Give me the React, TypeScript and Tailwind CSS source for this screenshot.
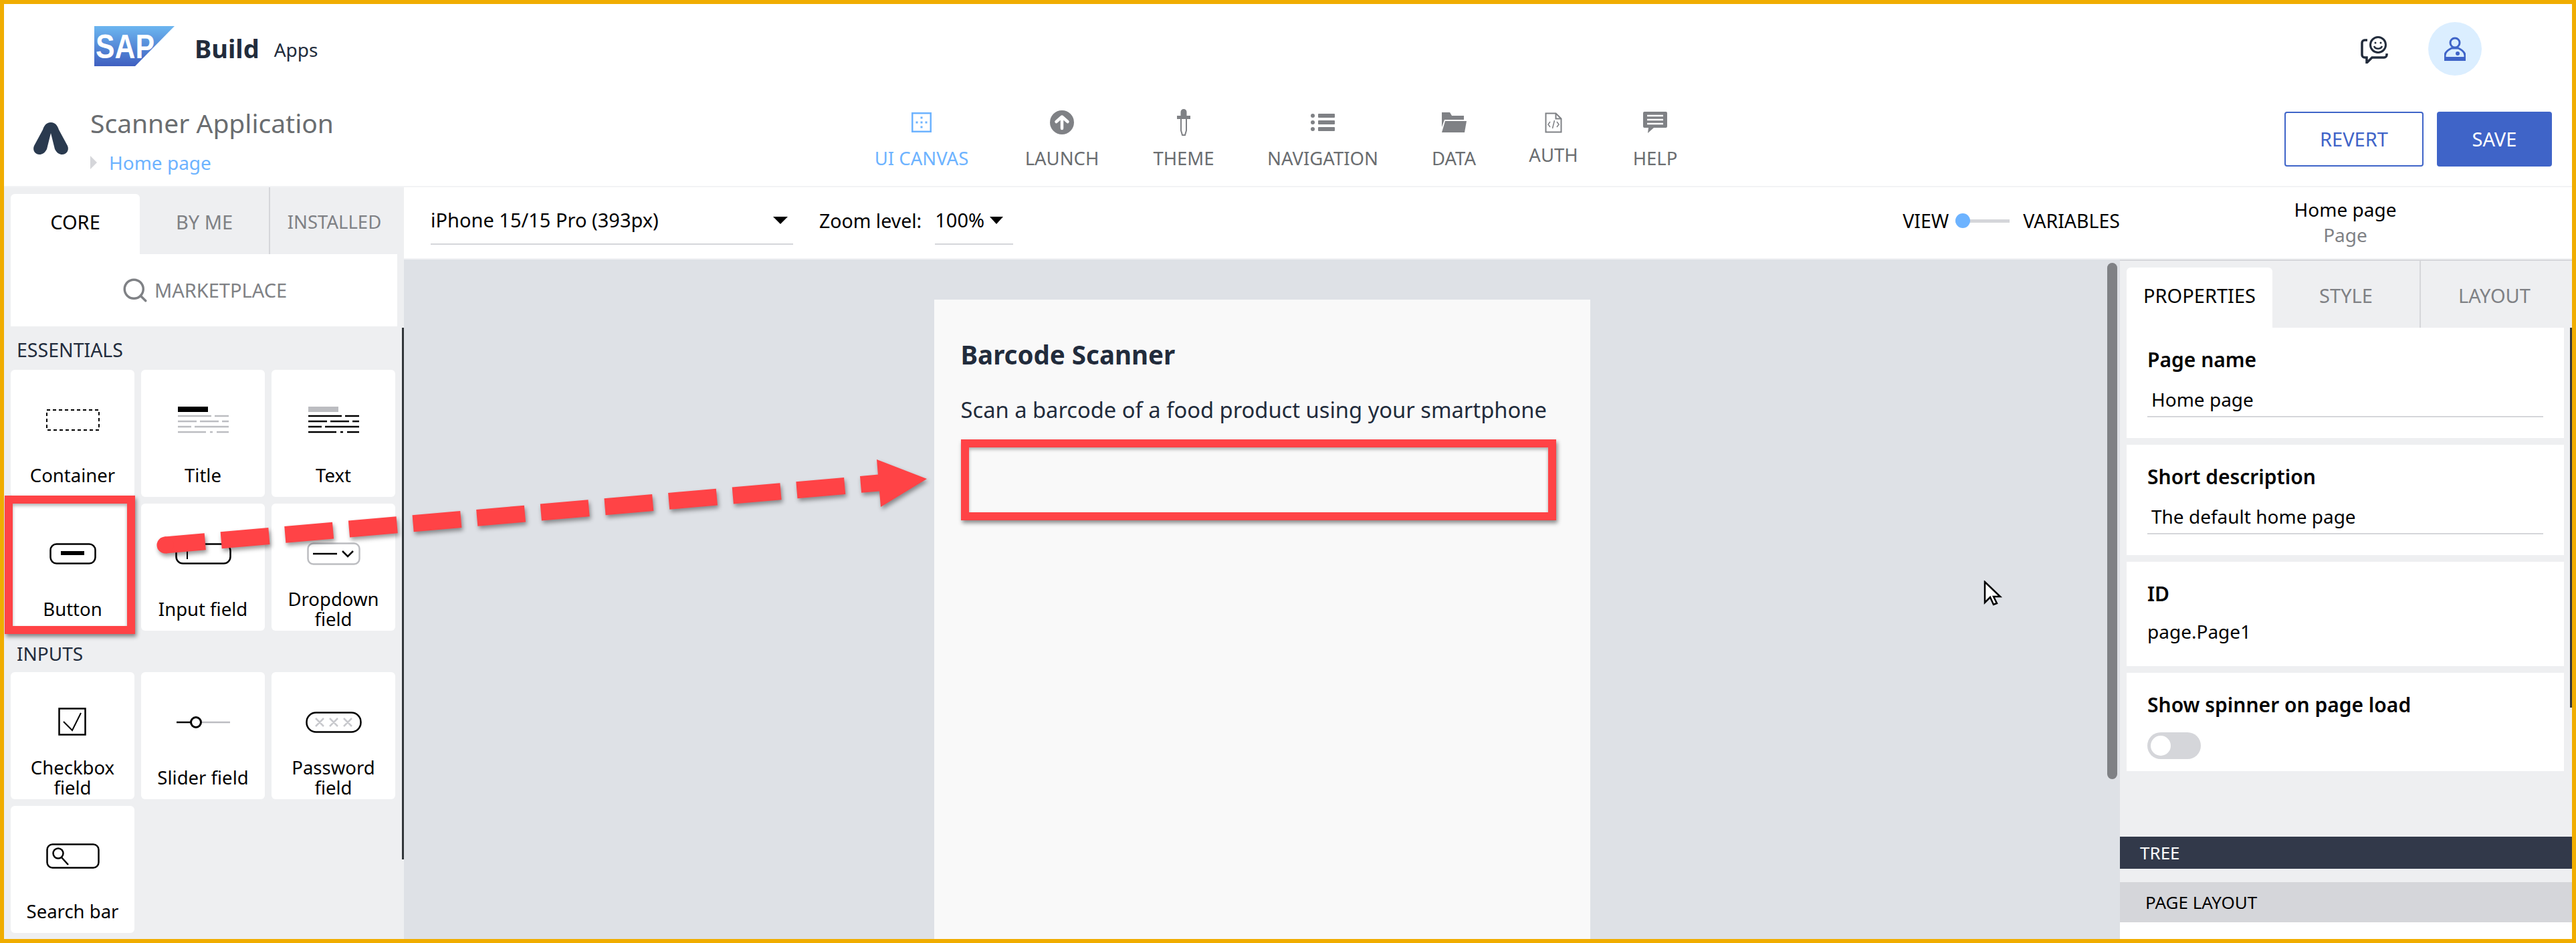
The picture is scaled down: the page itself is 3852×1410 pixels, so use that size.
import React from "react";
import { Search } from "lucide-react";

const font = "font-['Noto_Sans',sans-serif]";

function NavIcon({ name }: { name: string }) {
    if (name === "UI CANVAS") {
        return (
            <svg width="30" height="30" viewBox="0 0 30 30">
                <rect x="1.250" y="1.250" width="27.500" height="27.500" fill="none" stroke="#6db3ff" strokeWidth="2.500" />
                <rect x="13.500" y="6.500" width="3" height="3" fill="#6db3ff" />
                <rect x="13.500" y="13.500" width="3" height="3" fill="#6db3ff" />
                <rect x="13.500" y="20.500" width="3" height="3" fill="#6db3ff" />
                <rect x="6.500" y="13.500" width="3" height="3" fill="#6db3ff" />
                <rect x="20.500" y="13.500" width="3" height="3" fill="#6db3ff" />
            </svg>
        );
    }
    if (name === "LAUNCH") {
        return (
            <svg width="36" height="36" viewBox="0 0 36 36">
                <circle cx="18" cy="18" r="18" fill="#7f8185" />
                <path d="M18 27V10M9.500 17L18 9.500 26.500 17" fill="none" stroke="#fff" strokeWidth="4.500" strokeLinecap="round" strokeLinejoin="round" />
            </svg>
        );
    }
    if (name === "THEME") {
        return (
            <svg width="20" height="40" viewBox="0 0 20 40">
                <path d="M5.500 10V4.500a4.500 4.500 0 0 1 9 0V10H20v5H0v-5z" fill="#7f8185" />
                <path d="M6 15v17l2 7h4l2-7V15" fill="#fff" stroke="#7f8185" strokeWidth="2" />
            </svg>
        );
    }
    if (name === "NAVIGATION") {
        return (
            <svg width="36" height="28" viewBox="0 0 36 28">
                <circle cx="3" cy="4" r="3" fill="#7f8185" />
                <circle cx="3" cy="14" r="3" fill="#7f8185" />
                <circle cx="3" cy="24" r="3" fill="#7f8185" />
                <rect x="11" y="1" width="25" height="6" rx="1" fill="#7f8185" />
                <rect x="11" y="11" width="25" height="6" rx="1" fill="#7f8185" />
                <rect x="11" y="21" width="25" height="6" rx="1" fill="#7f8185" />
            </svg>
        );
    }
    if (name === "DATA") {
        return (
            <svg width="38" height="30" viewBox="0 0 38 30">
                <path d="M1 0h12l3 5h18v6H5L1 22z" fill="#7f8185" />
                <path d="M6 13h32l-3 17H1z" fill="#7f8185" />
            </svg>
        );
    }
    if (name === "AUTH") {
        return (
            <svg width="26" height="31" viewBox="0 0 26 31">
                <path d="M1.500 1.500h15l8 8v20h-23zM16.500 1.500v8h8" fill="none" stroke="#7f8185" strokeWidth="2" />
                <path d="M8 14l-3 4 3 4M18 14l3 4-3 4M14.500 12l-3 12" fill="none" stroke="#7f8185" strokeWidth="1.500" />
            </svg>
        );
    }
    return (
        <svg width="36" height="32" viewBox="0 0 36 32">
            <path d="M2 0h32a2 2 0 0 1 2 2v20a2 2 0 0 1-2 2H16l-9 8 1-8H2a2 2 0 0 1-2-2V2a2 2 0 0 1 2-2z" fill="#7f8185" />
            <path d="M6 6h24M6 12h24M6 18h24" stroke="#fff" strokeWidth="2.500" />
        </svg>
    );
}

function PaletteIcon({ name }: { name: string }) {
    const lines = (top: string, rest: string) => (
        <svg width="76" height="40" viewBox="0 0 76 40">
            <rect x="0" y="0" width="45" height="8" fill={top} />
            <path d="M0 14h50M55 14h21M0 22h28M33 22h28M66 22h10M0 30h20M25 30h51M0 38h42M48 38h4M58 38h18" stroke={rest} strokeWidth="2.500" />
        </svg>
    );
    switch (name) {
        case "Container":
            return (
                <svg width="80" height="32" viewBox="0 0 80 32">
                    <rect x="1" y="1" width="78" height="30" fill="none" stroke="#000" strokeWidth="2" strokeDasharray="5 4" />
                </svg>
            );
        case "Title":
            return lines("#000", "#bcbdc1");
        case "Text":
            return lines("#bcbdc1", "#000");
        case "Button":
            return (
                <svg width="70" height="32" viewBox="0 0 70 32">
                    <rect x="1.500" y="1.500" width="67" height="29" rx="9" fill="none" stroke="#000" strokeWidth="2.500" />
                    <rect x="17" y="12" width="35" height="6" fill="#000" />
                </svg>
            );
        case "Input field":
            return (
                <svg width="84" height="32" viewBox="0 0 84 32">
                    <rect x="1.500" y="1.500" width="81" height="29" rx="10" fill="none" stroke="#000" strokeWidth="2.500" />
                    <path d="M18 8v16" stroke="#000" strokeWidth="2" />
                </svg>
            );
        case "Dropdown field":
            return (
                <svg width="80" height="34" viewBox="0 0 80 34">
                    <rect x="1.500" y="1.500" width="77" height="31" rx="8" fill="#fff" stroke="#bcbdc1" strokeWidth="2.500" />
                    <path d="M9 17h36" stroke="#000" strokeWidth="2.500" />
                    <path d="M53 13l8 8 8-8" fill="none" stroke="#000" strokeWidth="2.500" />
                </svg>
            );
        case "Checkbox field":
            return (
                <svg width="44" height="44" viewBox="0 0 44 44">
                    <rect x="1.500" y="1.500" width="39" height="39" fill="none" stroke="#000" strokeWidth="2.500" />
                    <path d="M8 21l13 13L34 8" fill="none" stroke="#000" strokeWidth="2" />
                </svg>
            );
        case "Slider field":
            return (
                <svg width="80" height="20" viewBox="0 0 80 20">
                    <path d="M0 10h22" stroke="#000" strokeWidth="2.500" />
                    <path d="M38 10h42" stroke="#bcbdc1" strokeWidth="2.500" />
                    <circle cx="29" cy="10" r="7.500" fill="#fff" stroke="#000" strokeWidth="3" />
                </svg>
            );
        case "Password field":
            return (
                <svg width="84" height="32" viewBox="0 0 84 32">
                    <rect x="1.500" y="1.500" width="81" height="29" rx="14" fill="none" stroke="#000" strokeWidth="2.500" />
                    <path d="M15 10l12 12M27 10L15 22M36 10l12 12M48 10L36 22M57 10l12 12M69 10L57 22" stroke="#c8c9cd" strokeWidth="2.500" />
                </svg>
            );
        default:
            return (
                <svg width="80" height="38" viewBox="0 0 80 38">
                    <rect x="1.500" y="1.500" width="77" height="35" rx="8" fill="none" stroke="#000" strokeWidth="2.500" />
                    <circle cx="18" cy="15" r="7.500" fill="none" stroke="#000" strokeWidth="2.500" />
                    <path d="M23 21l10 11" stroke="#000" strokeWidth="2.500" />
                </svg>
            );
    }
}

const essentials = ["Container", "Title", "Text", "Button", "Input field", "Dropdown field"];
const inputs = ["Checkbox field", "Slider field", "Password field", "Search bar"];
const nav = [
    { name: "UI CANVAS", width: "w-[210px]" },
    { name: "LAUNCH", width: "w-[210px]" },
    { name: "THEME", width: "w-[154px]" },
    { name: "NAVIGATION", width: "w-[262px]" },
    { name: "DATA", width: "w-[130px]" },
    { name: "AUTH", width: "w-[168px]" },
    { name: "HELP", width: "w-[136px]" },
];

function PaletteCard({ name }: { name: string }) {
    return (
        <div className="h-[190px] rounded-md bg-white flex flex-col items-center overflow-hidden">
            <div className="h-[126px] pt-[24px] flex items-center justify-center">
                <PaletteIcon name={name} />
            </div>
            <div className="flex-1 w-full flex items-center justify-center text-center text-[27.500px] leading-[30px] text-black px-5">
                {name}
            </div>
        </div>
    );
}

function PropertyCard({ label, value, field }: { label: string; value: string; field?: boolean }) {
    return (
        <div className={`bg-white px-[31px] pt-[33px] ${field ? "h-[165px]" : "h-[156px]"}`}>
            <div className="text-[30px] leading-[30px] font-semibold text-black">{label}</div>
            {field ? (
                <div className="mt-[26px] pl-[6px] pb-[6px] border-b-2 border-[#d5d6da] text-[28px] leading-[37px] text-black">
                    {value}
                </div>
            ) : (
                <div className="mt-[23px] text-[28px] leading-[37px] text-black">{value}</div>
            )}
        </div>
    );
}

export default function App() {
    return (
        <div className={`relative w-[3852px] h-[1410px] overflow-hidden border-[6px] border-[#f0ad00] bg-white ${font}`}>
            {/* Global header */}
            <div className="h-[274px] border-b-2 border-[#f2f3f5]">
                <div className="h-[146px] flex items-start pl-[135px] pr-[135px] pt-[33px]">
                    <svg width="120" height="60" viewBox="0 0 120 60">
                        <defs>
                            <linearGradient id="sapBlue" x1="0" y1="0" x2="0" y2="1">
                                <stop offset="0" stopColor="#6cb6f0" />
                                <stop offset="1" stopColor="#3f5fc0" />
                            </linearGradient>
                        </defs>
                        <path d="M0 0h120L61 60H0z" fill="url(#sapBlue)" />
                        <text x="2" y="48" fontFamily="Liberation Sans" fontWeight="700" fontSize="50" fill="#fff" textLength="88" lengthAdjust="spacingAndGlyphs">
                            SAP
                        </text>
                    </svg>
                    <div className="ml-[30px] mt-[13px] text-[38px] leading-[40px] font-bold text-[#222c3c]">Build</div>
                    <div className="ml-[22px] mt-[17px] text-[28px] leading-[36px] text-[#222c3c]">Apps</div>
                    <div className="ml-auto flex items-start gap-[59px] -mt-[6px]">
                        <svg width="42" height="42" viewBox="0 0 42 42" className="mt-[20px]">
                            <path d="M10 7H6a4 4 0 0 0-4 4v18a4 4 0 0 0 4 4h3v8l8-8h18a4 4 0 0 0 4-4v-2" fill="none" stroke="#222c3c" strokeWidth="3.500" />
                            <circle cx="26" cy="14" r="11.500" fill="none" stroke="#222c3c" strokeWidth="3" />
                            <path d="M20 16c2 5 10 5 12 0" fill="none" stroke="#222c3c" strokeWidth="2.500" />
                            <circle cx="22" cy="11" r="1.500" fill="#222c3c" />
                            <circle cx="30" cy="11" r="1.500" fill="#222c3c" />
                        </svg>
                        <div className="w-[80px] h-[80px] rounded-full bg-[#dbeeff] flex items-center justify-center">
                            <svg width="32" height="36" viewBox="0 0 32 36">
                                <circle cx="16" cy="9" r="7" fill="none" stroke="#3f64c8" strokeWidth="3" />
                                <path d="M1 35v-7c0-6 6-9 10-11h10c4 2 10 5 10 11v7z" fill="none" stroke="#3f64c8" strokeWidth="3" />
                                <rect x="1" y="30" width="30" height="5" fill="#3f64c8" />
                                <circle cx="20" cy="25" r="3" fill="#3f64c8" />
                            </svg>
                        </div>
                    </div>
                </div>

                {/* App bar */}
                <div className="flex items-start h-[126px] pl-[42px] pr-[30px]">
                    <div className="w-[1225px] shrink-0 flex items-start">
                        <svg width="56" height="48" viewBox="0 0 56 48" className="mt-[31px]">
                            <path d="M28 0c7 0 10 5 12 11l13 24c3 7-2 13-8 13-4 0-8-2-11-8l-6-24-6 24c-3 6-7 8-11 8-6 0-11-6-8-13l13-24C18 5 21 0 28 0z" fill="#2a3a4f" />
                        </svg>
                        <div className="ml-[31px]">
                            <div className="text-[39px] leading-[44px] text-[#6a6d70] mt-[10px]">Scanner Application</div>
                            <div className="flex items-center mt-[19px]">
                                <div className="w-0 h-0 border-y-[10px] border-y-transparent border-l-[10px] border-l-[#d5d6da] mr-[18px]" />
                                <span className="text-[28px] leading-[36px] text-[#6db3ff]">Home page</span>
                            </div>
                        </div>
                    </div>
                    <div className="flex items-start">
                        {nav.map((n) => (
                            <div
                                key={n.name}
                                className={`${n.width} h-[110px] flex flex-col items-center ${n.name === "UI CANVAS" ? "text-[#6db3ff]" : "text-[#6a6d70]"}`}
                            >
                                <div className="h-[44px] mt-[9px] flex items-center">
                                    <NavIcon name={n.name} />
                                </div>
                                <div className={`text-[27.500px] leading-[30px] ${n.name === "AUTH" ? "mt-[12px]" : "mt-[17px]"}`}>{n.name}</div>
                            </div>
                        ))}
                    </div>
                    <div className="ml-auto flex gap-[20px] mt-[15px]">
                        <div className="w-[208px] h-[82px] rounded-[4px] border-2 border-[#3f64c8] bg-white flex items-center justify-center text-[29px] text-[#3f64c8]">
                            REVERT
                        </div>
                        <div className="w-[172px] h-[82px] rounded-[4px] bg-[#3f64c8] flex items-center justify-center text-[29px] text-white">
                            SAVE
                        </div>
                    </div>
                </div>
            </div>

            {/* Main row */}
            <div className="flex h-[1124px]">
                {/* Left palette */}
                <div className="relative w-[598px] shrink-0 bg-[#eeeff1]">
                    <div className="flex h-[100px] pl-[10px]">
                        <div className="w-[193px] mt-[10px] pb-[6px] rounded-t-md bg-white flex items-center justify-center text-[29px] text-black">CORE</div>
                        <div className="w-[193px] flex items-center justify-center text-[29px] text-[#7f8185] pt-[4px]">BY ME</div>
                        <div className="flex-1 border-l-2 border-[#d5d6da] flex items-center justify-center text-[27.500px] text-[#7f8185] pt-[4px] pr-[8px]">INSTALLED</div>
                    </div>
                    <div className="ml-[10px] mr-[10px] h-[108px] bg-white flex items-center justify-center gap-[8px] text-[29px] text-[#7f8185]">
                        <Search size={42} strokeWidth={2} />
                        MARKETPLACE
                    </div>
                    <div className="pl-[10px] pr-[13px]">
                        <div className="h-[65px] pl-[9px] pt-[20px] text-[28.500px] leading-[30px] text-[#222c3c]">ESSENTIALS</div>
                        <div className="grid grid-cols-3 gap-[10px]">
                            {essentials.map((n) => (
                                <PaletteCard key={n} name={n} />
                            ))}
                        </div>
                        <div className="h-[62px] pl-[9px] pt-[19px] text-[28px] leading-[30px] text-[#222c3c]">INPUTS</div>
                        <div className="grid grid-cols-3 gap-[10px]">
                            {inputs.map((n) => (
                                <PaletteCard key={n} name={n} />
                            ))}
                        </div>
                    </div>
                    <div className="absolute right-0 top-[210px] w-[3px] h-[795px] bg-[#32363a]" />
                </div>

                {/* Centre and right */}
                <div className="flex-1 flex flex-col min-w-0">
                    <div className="h-[108px] shrink-0 border-b-2 border-[#f2f3f5] flex text-black">
                        <div className="w-[542px] ml-[40px] h-[86px] pt-[14px] border-b-2 border-[#d5d6da] flex items-center justify-between pr-[8px]">
                            <span className="text-[29px]">iPhone 15/15 Pro (393px)</span>
                            <div className="w-0 h-0 border-x-[11px] border-x-transparent border-t-[11px] border-t-black" />
                        </div>
                        <div className="ml-[39px] h-[86px] pt-[14px] flex items-center text-[28.500px]">Zoom level:</div>
                        <div className="ml-[20px] w-[117px] h-[86px] pt-[14px] border-b-2 border-[#d5d6da] flex items-center gap-[8px] text-[29px]">
                            100%
                            <div className="w-0 h-0 border-x-[10px] border-x-transparent border-t-[11px] border-t-black" />
                        </div>
                        <div className="ml-auto flex items-center h-[100px] text-[28.500px]">
                            VIEW
                            <div className="relative ml-[10px] w-[81px] h-[5px] bg-[#d5d6da]">
                                <div className="absolute left-0 -top-[9px] w-[22px] h-[22px] rounded-full bg-[#6db3ff]" />
                            </div>
                            <span className="ml-[20px]">VARIABLES</span>
                        </div>
                        <div className="w-[676px] shrink-0 flex flex-col items-center pt-[14px] pr-[2px] text-[28px] leading-[38px]">
                            <span>Home page</span>
                            <span className="text-[#7f8185]">Page</span>
                        </div>
                    </div>
                    <div className="flex-1 flex min-h-0">
                        {/* Canvas */}
                        <div className="relative flex-1 bg-[#dee1e6] flex justify-center min-w-0">
                            <div className="w-[981px] mt-[60px] bg-[#f9f9f9] pl-[40px] ml-[-20px] mr-[-20px] text-[#222c3c]">
                                <div className="mt-[60px] text-[38.500px] leading-[44px] font-bold">Barcode Scanner</div>
                                <div className="mt-[39px] text-[32.700px] leading-[44px]">Scan a barcode of a food product using your smartphone</div>
                            </div>
                            <div className="absolute right-[4px] top-[5px] w-[15px] h-[772px] rounded-full bg-[#7f8185]" />
                        </div>

                        {/* Right panel */}
                        <div className="relative w-[676px] shrink-0 bg-[#eeeff1] border-t-2 border-[#d5d6da] flex flex-col">
                            <div className="flex h-[100px] pl-[10px]">
                                <div className="w-[218px] mt-[10px] pb-[6px] rounded-t-md bg-white flex items-center justify-center text-[29px] text-black">PROPERTIES</div>
                                <div className="w-[220px] pt-[4px] flex items-center justify-center text-[29px] text-[#7f8185]">STYLE</div>
                                <div className="flex-1 pt-[4px] pr-[6px] border-l-2 border-[#d5d6da] flex items-center justify-center text-[29px] text-[#7f8185]">LAYOUT</div>
                            </div>
                            <div className="ml-[10px] mr-[12px] flex flex-col gap-[10px]">
                                <PropertyCard label="Page name" value="Home page" field />
                                <PropertyCard label="Short description" value="The default home page" field />
                                <PropertyCard label="ID" value="page.Page1" />
                                <div className="bg-white px-[31px] pt-[33px] h-[147px]">
                                    <div className="text-[30px] leading-[30px] font-semibold text-black">Show spinner on page load</div>
                                    <div className="relative mt-[26px] w-[80px] h-[40px] rounded-full bg-[#d5d6da]">
                                        <div className="absolute left-[5px] top-[5px] w-[30px] h-[30px] rounded-full bg-white" />
                                    </div>
                                </div>
                            </div>
                            <div className="mt-[98px] h-[48px] bg-[#32394a] pl-[30px] flex items-center text-[26px] text-white">TREE</div>
                            <div className="mt-[20px] h-[60px] bg-[#d5d6da] pl-[38px] flex items-center text-[26px] text-black">PAGE LAYOUT</div>
                            <div className="flex-1 bg-white" />
                            <div className="absolute right-0 top-[100px] w-[3px] h-[568px] bg-[#32363a]" />
                        </div>
                    </div>
                </div>
            </div>

            {/* Tutorial annotations */}
            <div className="absolute left-[1px] top-[735px] w-[195px] h-[207px] border-[12px] border-[#ff4346] shadow-[2px_4px_6px_rgba(0,0,0,0.45),inset_0_3px_5px_rgba(0,0,0,0.3)]" />
            <div className="absolute left-[1431px] top-[651px] w-[890px] h-[121px] border-[12px] border-[#ff4346] shadow-[2px_4px_6px_rgba(0,0,0,0.45),inset_0_3px_5px_rgba(0,0,0,0.3)]" />
            <svg width="3852" height="1410" viewBox="0 0 3852 1410" className="absolute -left-[6px] -top-[6px] pointer-events-none drop-shadow-[2px_4px_3px_rgba(0,0,0,0.4)]">
                <path d="M247 815L1320 721.500" stroke="#ff4346" strokeWidth="25" strokeDasharray="72 24" strokeDashoffset="12" fill="none" />
                <circle cx="247" cy="815" r="12.500" fill="#ff4346" />
                <path d="M1386 716L1311 687L1317 758z" fill="#ff4346" />
            </svg>

            {/* Mouse cursor */}
            <svg width="30" height="40" viewBox="0 0 30 40" className="absolute left-[2960px] top-[862px]">
                <path d="M2 2v31l8-8 5 11 5-2-5-10h10z" fill="#fff" stroke="#000" strokeWidth="2.500" />
            </svg>
        </div>
    );
}
